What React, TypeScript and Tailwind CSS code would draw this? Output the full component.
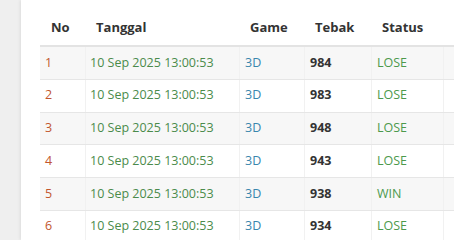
const rows = [
  { no: 1, tebak: "984", status: "LOSE" },
  { no: 2, tebak: "983", status: "LOSE" },
  { no: 3, tebak: "948", status: "LOSE" },
  { no: 4, tebak: "943", status: "LOSE" },
  { no: 5, tebak: "938", status: "WIN" },
  { no: 6, tebak: "934", status: "LOSE" },
];

const cols = "grid grid-cols-[45px_154px_65px_67px_72px_1fr]";

export default function App() {
  return (
    <div
      className="flex h-[240px] w-[454px] overflow-hidden bg-[#efefef] text-[12.5px]"
      style={{ fontFamily: '"Open Sans", "Noto Sans", sans-serif' }}
    >
      <div className="w-[21px] shrink-0" />
      <div className="flex flex-1 bg-white pl-[19px] shadow-[-1px_0_3px_rgba(0,0,0,0.08)]">
        <div className="flex-1">
          {/* header */}
          <div className={`${cols} h-[47px] items-end border-b-2 border-[#e3e3e3] pb-[8px] text-[13px] font-bold text-[#333]`}>
            <div className="pl-[11px]">No</div>
            <div className="pl-[11px]">Tanggal</div>
            <div className="pl-[11px]">Game</div>
            <div className="pl-[11px]">Tebak</div>
            <div className="pl-[11px]">Status</div>
            <div />
          </div>
          {rows.map((r) => (
            <div
              key={r.no}
              className={`${cols} h-[32.75px] border-b border-[#e6e6e6] ${
                r.no % 2 === 1 ? "bg-[#f7f7f7]" : "bg-white"
              }`}
            >
              <div className="flex items-center pl-[5px] text-[#c2562e]">{r.no}</div>
              <div className="flex items-center border-l border-[#f1f1f1] pl-[4px] text-[#4b8b4b]">
                10 Sep 2025 13:00:53
              </div>
              <div className="flex items-center border-l border-[#f1f1f1] pl-[5px] text-[#3a86ad]">3D</div>
              <div className="flex items-center border-l border-[#f1f1f1] pl-[5px] font-bold text-[#333]">
                {r.tebak}
              </div>
              <div className="flex items-center border-l border-[#f1f1f1] pl-[5px] text-[#4c994c]">{r.status}</div>
              <div className="border-l border-[#f1f1f1]" />
            </div>
          ))}
        </div>
      </div>
    </div>
  );
}
